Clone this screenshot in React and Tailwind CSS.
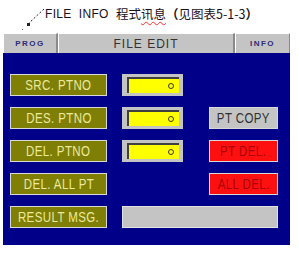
import React from 'react';

const font = { fontFamily: '"Liberation Sans", Arial, sans-serif' };

const Label = ({ children }) => (
  <div className="w-[97px] h-[22px] bg-[#7f7f06] border border-[#d8d8d8] flex items-center justify-center shrink-0">
    <span className="text-[14px] leading-none text-[#ecea9c] tracking-[0.5px] scale-x-[0.82] whitespace-pre">{children}</span>
  </div>
);

const Field = () => (
  <div className="ml-[15px] w-[61px] h-[22px] bg-[#c4c4c4] shrink-0 pt-[3px] pl-[5px]">
    <div className="w-[52px] h-[16px] bg-[#ffff00] border-t-2 border-l-2 border-[#404040] flex items-center justify-end pr-[5px]">
      <div className="w-[6px] h-[6px] rounded-full border border-[#3a3a10]" />
    </div>
  </div>
);

const Action = ({ children, red }) => (
  <div
    className={
      'ml-[26px] w-[69px] h-[22px] border border-[#d8d8d8] flex items-center justify-center shrink-0 ' +
      (red ? 'bg-[#ff1010]' : 'bg-[#c4c4c4]')
    }
  >
    <span
      className={
        'text-[14px] leading-none tracking-[0.5px] scale-x-[0.82] whitespace-pre ' +
        (red ? 'text-[#a80000]' : 'text-[#303030]')
      }
    >
      {children}
    </span>
  </div>
);

const App = () => {
  return (
    <div className="w-[299px] h-[253px] bg-white overflow-hidden" style={font}>
      {/* caption */}
      <div className="relative h-[33px]">
        <svg className="absolute left-0 top-0" width="50" height="33" viewBox="0 0 50 33">
          <line x1="44" y1="9" x2="29" y2="23" stroke="#222" strokeWidth="1" strokeDasharray="2 2" />
          <rect x="27" y="23" width="3" height="3" fill="#222" />
          <rect x="22" y="29" width="1" height="1" fill="#666" />
        </svg>
        <div className="absolute left-[45px] top-[8px] flex items-center text-[12px] leading-none text-[#1a1020] whitespace-pre">
          <span className="tracking-[0.3px]">FILE  INFO  </span>
          <span className="text-[12.5px]" style={{ fontFamily: '"Noto Sans CJK SC", sans-serif' }}>
            程式<span className="underline decoration-wavy decoration-red-500 decoration-1 underline-offset-2">讯息</span>
            <span className="font-bold">（</span>见图表5-1-3<span className="font-bold">）</span>
          </span>
        </div>
      </div>

      <div className="ml-[3px] w-[287px]">
        {/* header */}
        <div className="flex h-[20px] bg-[#c4c4c4]">
          <div className="w-[55px] border-t border-l border-white border-r-2 border-r-[#8a8a8a] flex items-center justify-center">
            <span className="text-[8px] font-bold tracking-[1.5px] text-[#2c2c78]">PROG</span>
          </div>
          <div className="flex-1 border-t border-l border-white border-r-2 border-r-[#8a8a8a] flex items-center justify-center">
            <span className="text-[12px] tracking-[1px] text-[#333]">FILE EDIT</span>
          </div>
          <div className="w-[55px] border-t border-l border-white border-r border-r-[#8a8a8a] flex items-center justify-center">
            <span className="text-[8px] font-bold tracking-[1.5px] text-[#2c2c78]">INFO</span>
          </div>
        </div>

        {/* body */}
        <div className="h-[192px] bg-[#000088] pl-[7px] pt-[21px] flex flex-col gap-[11px]">
          <div className="flex">
            <Label>SRC. PTNO</Label>
            <Field />
          </div>
          <div className="flex">
            <Label>DES. PTNO</Label>
            <Field />
            <Action>PT COPY</Action>
          </div>
          <div className="flex">
            <Label>DEL. PTNO</Label>
            <Field />
            <Action red>PT DEL.</Action>
          </div>
          <div className="flex">
            <Label>DEL. ALL PT</Label>
            <div className="w-[76px] shrink-0" />
            <Action red>ALL DEL.</Action>
          </div>
          <div className="flex">
            <Label>RESULT MSG.</Label>
            <div className="ml-[15px] w-[156px] h-[22px] bg-[#c4c4c4] border border-[#e0e0e0]" />
          </div>
        </div>
      </div>
    </div>
  );
};

export default App;
